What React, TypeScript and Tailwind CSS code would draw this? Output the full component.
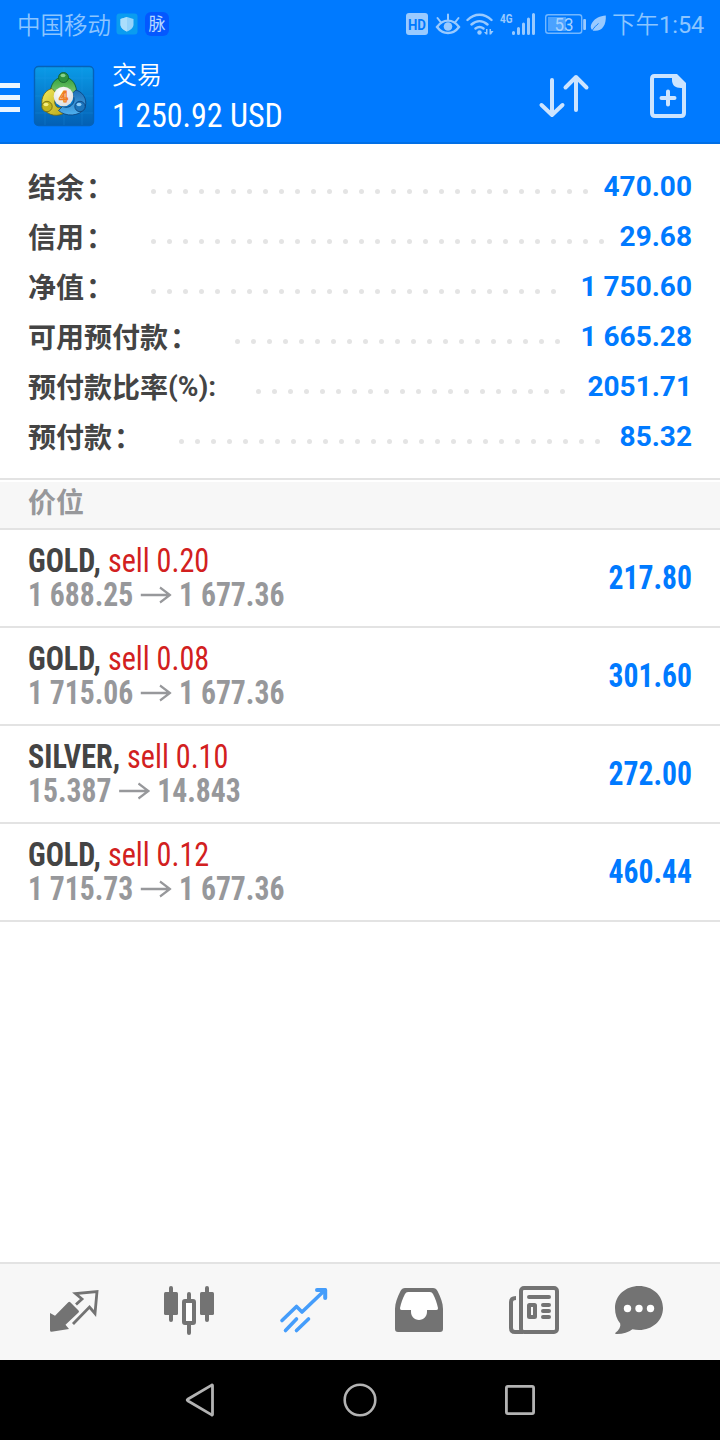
import type { ReactNode } from 'react';
import clsx from 'clsx';

type SummaryRow = { label: string; suffix?: string; value: string; dots: number };
type Position = { symbol: string; side: string; volume: string; open: string; current: string; profit: string };

const summary: SummaryRow[] = [
  { label: '结余', value: '470.00', dots: 28 },
  { label: '信用', value: '29.68', dots: 29 },
  { label: '净值', value: '1 750.60', dots: 26 },
  { label: '可用预付款', value: '1 665.28', dots: 21 },
  { label: '预付款比率', suffix: '(%):', value: '2051.71', dots: 20 },
  { label: '预付款', value: '85.32', dots: 27 },
];

const positions: Position[] = [
  { symbol: 'GOLD', side: 'sell', volume: '0.20', open: '1 688.25', current: '1 677.36', profit: '217.80' },
  { symbol: 'GOLD', side: 'sell', volume: '0.08', open: '1 715.06', current: '1 677.36', profit: '301.60' },
  { symbol: 'SILVER', side: 'sell', volume: '0.10', open: '15.387', current: '14.843', profit: '272.00' },
  { symbol: 'GOLD', side: 'sell', volume: '0.12', open: '1 715.73', current: '1 677.36', profit: '460.44' },
];

function Icon({ box, className, children }: { box: string; className?: string; children: ReactNode }) {
  const [, , w, h] = box.split(' ').map(Number);
  return (
    <svg width={w} height={h} viewBox={box} fill="none" className={clsx('shrink-0', className)}>
      {children}
    </svg>
  );
}

function StatusBar() {
  return (
    <div className="flex h-12 items-center pl-[17px] text-[#8cc5ff]">
      <span className="w-[99px] whitespace-nowrap pt-[4px] text-[23.5px] font-[350] leading-[44px]">中国移动</span>
      <Icon box="116 14 22 22">
        <rect x="116.5" y="14.5" width="21" height="21" rx="3" fill="#0a9cf0" />
        <path d="M127 18l6.500 2v5.500c0 3.500-3 5.500-6.500 7-3.500-1.500-6.500-3.500-6.500-7V20z" fill="#94d3fb" />
        <path d="M127 18v14.500c-3.500-1.500-6.500-3.500-6.500-7V20z" fill="#abdefc" />
      </Icon>
      <span className="ml-[7px] flex h-6 w-6 items-center justify-center rounded-md bg-[#0458ff] pt-px text-[17px] leading-none text-[#b9d8ff]">脉</span>

      <Icon box="406 12 22 24" className="ml-[237px]">
        <rect x="406" y="13" width="22" height="22" rx="3" fill="#99caff" />
        <text x="417" y="29.500" textAnchor="middle" fontSize="15" fontWeight="700" fill="#007aff" textLength="18" lengthAdjust="spacingAndGlyphs">HD</text>
      </Icon>
      <Icon box="435 12 26 24" className="ml-[7px]">
        <path d="M437 27c6-8.500 16-8.500 22 0-6 8-16 8-22 0z" stroke="#99caff" strokeWidth="2.400" />
        <circle cx="448" cy="26.500" r="4.300" fill="#99caff" />
        <path d="M448 14.500v5M437.500 18l3.500 4.500M458.500 18l-3.500 4.500" stroke="#99caff" strokeWidth="2" strokeLinecap="round" />
      </Icon>
      <Icon box="466 12 28 24" className="ml-[5px]">
        <path d="M467.500 20c7-7 17-7 24 0M471.500 24.500c5-4.500 11-4.500 16 0M475.500 28.500c2.500-2 5.500-2 8 0" stroke="#99caff" strokeWidth="2.400" strokeLinecap="round" />
        <circle cx="479.500" cy="32.500" r="2.200" fill="#99caff" />
        <path d="M487.500 29v5.500H486l-2-2.500h2v-3zM489.500 34.500V29h1.500v2h2.500l-2.500 3.500z" fill="#99caff" />
      </Icon>
      <Icon box="499 12 37 24" className="ml-[5px]">
        <text x="500" y="23" fontSize="13" fontWeight="700" fill="#99caff" textLength="12.500" lengthAdjust="spacingAndGlyphs">4G</text>
        <path d="M513.500 32.500v1M518.500 28.500v5M523.500 24v9.500M528.500 19v14.500M533.500 14.500v19" stroke="#99caff" strokeWidth="3" strokeLinecap="round" />
      </Icon>
      <Icon box="545 12 41 24" className="ml-[9px]">
        <rect x="545.700" y="14.700" width="36" height="18.600" rx="2.500" stroke="#73b7ff" strokeWidth="1.400" />
        <rect x="548" y="17" width="18" height="14" fill="#4ba2ff" />
        <rect x="583.200" y="19" width="2.800" height="11" rx="1" fill="#99caff" />
        <text x="564" y="30.500" textAnchor="middle" fontSize="18" fill="#a5d1ff" textLength="19" lengthAdjust="spacingAndGlyphs">53</text>
      </Icon>
      <Icon box="590 12 17 24" className="ml-1">
        <path d="M605.800 15.500c.6 10-4 16.500-12.500 15.200-3-1.500-3.300-5-1-8.200 3-4.500 7.500-6.400 13.500-7z" fill="#99caff" />
        <path d="M591.500 31.500c2.500-4 4.500-6 7-8" stroke="#007aff" strokeWidth=".9" />
      </Icon>
      <span className="ml-[5px] whitespace-nowrap pt-[3px] text-[23.5px] font-[350] leading-[45px]">
        下午<span className="font-normal">1:54</span>
      </span>
    </div>
  );
}

function AppLogo() {
  return (
    <Icon box="33 65 62 62">
      <defs>
        <linearGradient id="tile" x1="0" y1="0" x2="0" y2="1">
          <stop offset="0" stopColor="#0a9be8" />
          <stop offset="1" stopColor="#0360b4" />
        </linearGradient>
        <linearGradient id="green" x1="0" y1="0" x2="0" y2="1">
          <stop offset="0" stopColor="#2fa03c" />
          <stop offset="1" stopColor="#8fd07a" />
        </linearGradient>
        <linearGradient id="yellow" x1="0" y1="0" x2="1" y2="1">
          <stop offset="0" stopColor="#f3ea5c" />
          <stop offset="1" stopColor="#b7a616" />
        </linearGradient>
        <linearGradient id="blue" x1="0" y1="0" x2="0" y2="1">
          <stop offset="0" stopColor="#1c6cb5" />
          <stop offset="1" stopColor="#4fb0ee" />
        </linearGradient>
        <radialGradient id="ball" cx=".4" cy=".3" r=".8">
          <stop offset="0" stopColor="#fff" />
          <stop offset="1" stopColor="#d8dadc" />
        </radialGradient>
      </defs>
      <rect x="34.500" y="66.500" width="59" height="59" rx="4" fill="url(#tile)" stroke="#0562b8" strokeWidth="1.400" />
      <path d="M45 67v58M64 67v58M82 67v58M35 78h58M35 96h58M35 113h58" stroke="#27a4ee" strokeOpacity=".2" />
      <path d="M63.500 77c8.500 0 14 8 13 18l-6 2c-1-6-3-8-7-8s-6 2-7 8l-6-2c-1-10 4.500-18 13-18z" fill="url(#green)" stroke="#0f5b25" strokeWidth=".8" />
      <path d="M52 88.500c-9 2-12.500 13-8.500 20 4.500 7.500 15 9 22.500 3.500l-3-5c-5 2-7 0-8-3s0-7 3-9z" fill="url(#yellow)" stroke="#6b6413" strokeWidth=".8" />
      <path d="M76 90c9.500 3 11.500 12.500 8.500 18.500-5 8-19 8.500-26 2l4-4c5 2 8.500 0 10.500-3s1-7-1-10z" fill="url(#blue)" stroke="#0b3f78" strokeWidth=".8" />
      <circle cx="63.500" cy="77.500" r="5" fill="#2d9340" stroke="#125a27" strokeWidth=".8" />
      <ellipse cx="63" cy="75.500" rx="2.500" ry="1.800" fill="#86d18d" />
      <circle cx="47" cy="106.500" r="5.200" fill="#c1b51e" stroke="#6b6413" strokeWidth=".8" />
      <ellipse cx="46" cy="104.500" rx="2.500" ry="1.800" fill="#f5ee80" />
      <circle cx="80" cy="106.500" r="5.200" fill="#1c75bd" stroke="#0b3f78" strokeWidth=".8" />
      <ellipse cx="79" cy="104.500" rx="2.500" ry="1.800" fill="#8fcdf7" />
      <circle cx="63.500" cy="96.500" r="9.800" fill="url(#ball)" />
      <text x="63.500" y="102" textAnchor="middle" fontSize="15.500" fontWeight="700" fill="#fde3cb" stroke="#ee7d22" strokeWidth="1.200">4</text>
    </Icon>
  );
}

function Header() {
  return (
    <header className="flex h-24 border-b-2 border-[#006fe6]">
      <div className="mt-[35px] flex w-5 flex-col gap-[7px]">
        <span className="h-[5px] bg-[#ebf5ff]" />
        <span className="h-[5px] bg-[#ebf5ff]" />
        <span className="h-[5px] bg-[#ebf5ff]" />
      </div>
      <div className="ml-[13px] mt-[17px]">
        <AppLogo />
      </div>
      <div className="ml-[17px] mt-2.5 flex w-[200px] flex-col text-white">
        <span className="text-[25px] font-[350] leading-9">交易</span>
        <span className="origin-left scale-x-[0.942] whitespace-nowrap text-[34px] leading-[42px] [font-stretch:75%]">1 250.92 USD</span>
      </div>
      <div className="ml-auto mr-[33px] flex pt-[22px]">
        <Icon box="538 70 52 52" className="mr-[59px]">
          <path d="M552 80v34M541.500 105l10.500 10 10.500-10M576 110V77M565.500 87.500L576 77l10.500 10.500" stroke="#cce4ff" strokeWidth="4" strokeLinecap="round" strokeLinejoin="round" />
        </Icon>
        <Icon box="649 70 38 52">
          <path d="M654.500 76H675l9 9v28q0 3-3 3h-26q-3 0-3-3V79q0-3 2.500-3z" stroke="#cce4ff" strokeWidth="4" />
          <path d="M672 74h5l9 9v5h-5c-6 0-9-3-9-8z" fill="#cce4ff" />
          <path d="M668 91.500v13M661.500 98h13" stroke="#cce4ff" strokeWidth="4" strokeLinecap="round" />
        </Icon>
      </div>
    </header>
  );
}

function Dots({ count, className }: { count: number; className: string }) {
  return (
    <div className={clsx('mt-[9px] flex gap-[11px]', className)}>
      {Array.from({ length: count }, (_, i) => (
        <span key={i} className="h-[5px] w-[5px] rounded-full bg-[#e4e4e4]" />
      ))}
    </div>
  );
}

function Summary() {
  return (
    <section className="h-[334px] px-7 pt-[18px]">
      {summary.map((row) => (
        <div key={row.label} className="flex h-[50px] items-center whitespace-nowrap text-[28px] font-bold">
          <span className="flex pt-[3px] text-[#444]">
            {row.label}
            {row.suffix ? <span className="-mt-0.5">{row.suffix}</span> : <span className="w-7 pl-0.5">：</span>}
          </span>
          <Dots count={row.dots} className={row.suffix ? 'ml-[40px]' : 'ml-[39px]'} />
          <span className="ml-auto text-[#007aff]">{row.value}</span>
        </div>
      ))}
    </section>
  );
}

function PositionRow({ position }: { position: Position }) {
  return (
    <li className="flex h-[98px] items-center justify-between border-b-2 border-[#e3e3e3] px-7 text-[33px] font-bold [font-stretch:75%]">
      <div className="leading-[34px]">
        <p className="origin-left scale-x-[0.914] text-[#444]">
          {position.symbol}, <span className="font-normal text-[#d22020]">{position.side} {position.volume}</span>
        </p>
        <p className="flex origin-left scale-x-[0.898] items-center text-[#97989b]">
          {position.open}
          <Icon box="0 0 35 18" className="mx-2">
            <path d="M.5 9h32M22 1.500L33 9l-11 7.500" stroke="#97989b" strokeWidth="2.400" />
          </Icon>
          {position.current}
        </p>
      </div>
      <span className="origin-right scale-x-[0.897] text-[#007aff]">{position.profit}</span>
    </li>
  );
}

function TabBar() {
  return (
    <nav className="flex h-[98px] items-center border-t-2 border-[#e3e3e3] bg-[#f7f7f7] pb-1">
      <Icon box="48 1284 52 52" className="ml-12">
        <path d="M50 1313l5 2.800 13.300-13.600q1-1 2 0l8.200 8.400q1 1 0 2l-13 12.200 3.500 4.200-17.500 2.800q-1.500 0-1.500-1.500z" fill="#737373" />
        <path d="M76 1304.500l6-5.500-6.500-5.500 21.500-2-2 22-5.500-6.500-16.500 17" stroke="#737373" strokeWidth="2.800" />
      </Icon>
      <Icon box="162 1284 54 52" className="ml-[62px]">
        <path d="M171 1288v32M207 1288v32M189 1294v8M189 1324v9" stroke="#737373" strokeWidth="4" strokeLinecap="round" />
        <rect x="164" y="1292" width="14" height="23" rx="1.500" fill="#737373" />
        <rect x="200" y="1292" width="14" height="23" rx="1.500" fill="#737373" />
        <rect x="184" y="1301" width="10" height="22" rx="1" fill="#fff" stroke="#737373" strokeWidth="4" />
      </Icon>
      <Icon box="278 1284 52 52" className="ml-[62px]">
        <path d="M282 1320.500l14.500-14 5.500 5.500 23-22M285.500 1330.500l11-11.500M296.500 1330.500l12-11.500" stroke="#459dfb" strokeWidth="3.600" strokeLinecap="round" strokeLinejoin="round" />
        <path d="M317 1290h8.200v8" stroke="#459dfb" strokeWidth="4" strokeLinecap="round" strokeLinejoin="round" />
      </Icon>
      <Icon box="393 1284 52 52" className="ml-[63px]">
        <path d="M408 1292h22q2 0 3 2c2.500 5 4 9 5 14q.3 2-1.500 2H427c0 6-4 10-8 10s-8-4-8-10h-9.500q-1.800 0-1.500-2c1-5 2.500-9 5-14q1-2 3-2z" fill="#fff" />
        <path fillRule="evenodd" clipRule="evenodd" d="M405 1288h28q3 0 4.500 3c3 6 5.500 12 5.500 18v20q0 3-3 3h-42q-3 0-3-3v-20c0-6 2.500-12 5.500-18q1.500-3 4.500-3zm3 4q-2 0-3 2c-2.500 5-4 9-5 14q-.3 2 1.500 2h9.500v2c0 4 3 8 8 8s8-4 8-8v-2h9.500q1.800 0 1.500-2c-1-5-2.500-9-5-14q-1-2-3-2z" fill="#737373" />
      </Icon>
      <Icon box="507 1284 54 52" className="ml-[62px]">
        <rect x="521" y="1288" width="36" height="44" rx="3" stroke="#737373" strokeWidth="4" />
        <path d="M516 1298q-5 0-5 4v26q0 4 4 4h8" stroke="#737373" strokeWidth="4" />
        <path d="M529 1297h20M543 1305h6M543 1311h6M543 1317h6" stroke="#737373" strokeWidth="4" strokeLinecap="round" />
        <rect x="529" y="1305" width="6" height="12" rx=".5" stroke="#737373" strokeWidth="4" />
      </Icon>
      <Icon box="613 1284 52 52" className="ml-[52px]">
        <path d="M639 1286c13.500 0 24 9.500 24 22s-10.500 22-24 22q-3.500 0-6.500-.7c-4 3.200-10 4.900-16.500 4.700q-1-.2-.8-1c4-3 5.800-6.500 5-9.500-3.400-4-5.200-9.500-5.200-15.500 0-12.500 10.500-22 24-22z" fill="#737373" />
        <circle cx="627.500" cy="1308.500" r="3.700" fill="#fff" />
        <circle cx="639" cy="1308.500" r="3.700" fill="#fff" />
        <circle cx="650.500" cy="1308.500" r="3.700" fill="#fff" />
      </Icon>
    </nav>
  );
}

function SystemNav() {
  return (
    <div className="flex h-20 items-center bg-black">
      <Icon box="184 1382 34 36" className="ml-[184px]">
        <path d="M212.500 1385.500v29q0 .8-.8.4l-24-14.200q-1-.7 0-1.400l24-14.200q.8-.4.8.4z" stroke="#b3b3b3" strokeWidth="2.800" strokeLinejoin="round" />
      </Icon>
      <Icon box="342 1382 36 36" className="ml-[124px]">
        <circle cx="360" cy="1400" r="15.300" stroke="#b3b3b3" strokeWidth="2.600" />
      </Icon>
      <Icon box="502 1382 36 36" className="ml-[124px]">
        <rect x="506.400" y="1386.400" width="27.200" height="27.200" rx="1.500" stroke="#b3b3b3" strokeWidth="2.800" />
      </Icon>
    </div>
  );
}

export default function App() {
  return (
    <div className="flex h-[1440px] w-[720px] flex-col overflow-hidden bg-white font-['Roboto','Noto_Sans_CJK_SC',sans-serif]">
      <div className="bg-[#007aff]">
        <StatusBar />
        <Header />
      </div>
      <Summary />
      <div className="border-y-2 border-[#e3e3e3] pt-0.5">
        <h2 className="h-[46px] bg-[#f7f7f7] px-7 pt-0.5 text-[28px] font-bold leading-10 text-[#97989b]">价位</h2>
      </div>
      <ul>
        {positions.map((position, i) => (
          <PositionRow key={i} position={position} />
        ))}
      </ul>
      <div className="grow" />
      <TabBar />
      <SystemNav />
    </div>
  );
}
